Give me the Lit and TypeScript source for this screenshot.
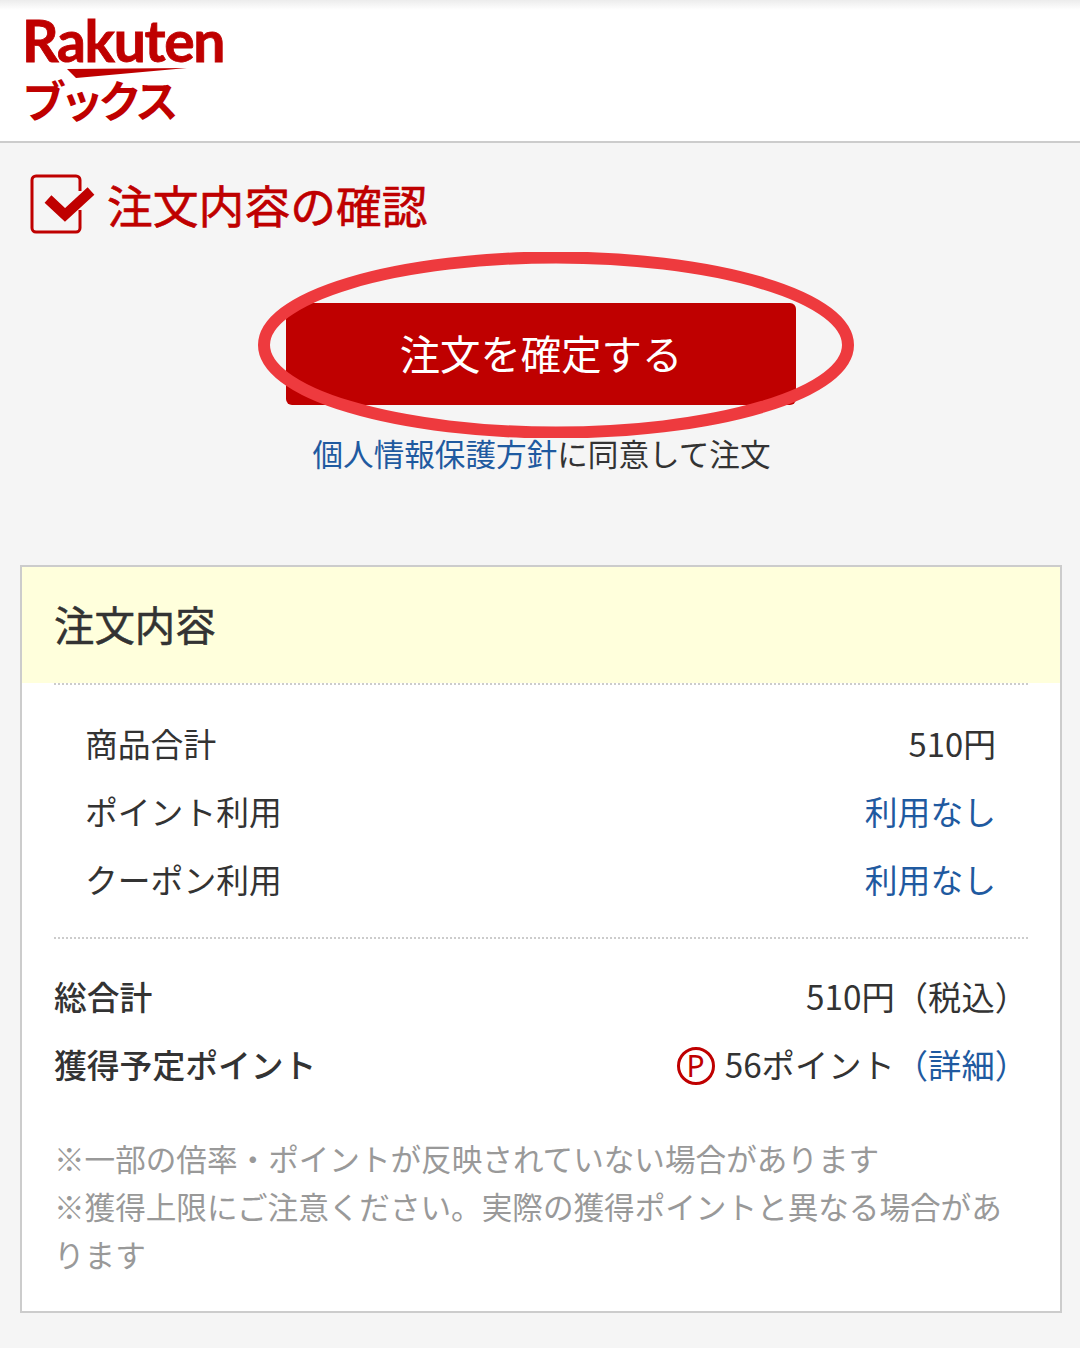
import { LitElement, html, css } from "lit";
import { customElement } from "lit/decorators.js";

@customElement("app-root")
export class AppRoot extends LitElement {
  render() {
    return html`
      <header class="header">
        <div class="logo">
          <div class="logo-word">Rakuten</div>
          <svg class="swoosh" width="130" height="14" viewBox="0 0 130 14">
            <polygon points="2,1 122,0 11,10" fill="#bf0000"></polygon>
          </svg>
          <div class="logo-books">ブックス</div>
        </div>
      </header>

      <main class="main">
        <h1 class="title">
          <svg class="check" width="66" height="60" viewBox="0 0 66 60">
            <path
              d="M50 17V6a4 4 0 0 0-4-4H6a4 4 0 0 0-4 4v48a4 4 0 0 0 4 4h40a4 4 0 0 0 4-4V36"
              fill="none"
              stroke="#bf0000"
              stroke-width="3"
            ></path>
            <path d="M18 25L35 41L61 17" fill="none" stroke="#bf0000" stroke-width="10"></path>
          </svg>
          注文内容の確認
        </h1>

        <div class="confirm">
          <button class="order-btn">注文を確定する</button>
          <svg class="circle" width="596" height="186" viewBox="0 0 596 186">
            <ellipse cx="298" cy="93" rx="292" ry="87.5" fill="none" stroke="#ee3a3e" stroke-width="12"></ellipse>
          </svg>
          <p class="agree"><a>個人情報保護方針</a>に同意して注文</p>
        </div>

        <section class="card">
          <h2 class="card-title">注文内容</h2>
          <div class="rows">
            <div class="row"><span>商品合計</span><span>510円</span></div>
            <div class="row"><span>ポイント利用</span><a>利用なし</a></div>
            <div class="row"><span>クーポン利用</span><a>利用なし</a></div>
          </div>
          <div class="totals">
            <div class="row"><span>総合計</span><span>510円（税込）</span></div>
            <div class="row">
              <span>獲得予定ポイント</span>
              <span class="points"><i class="p-mark">P</i>56ポイント<a>（詳細）</a></span>
            </div>
          </div>
          <p class="note">
            ※一部の倍率・ポイントが反映されていない場合があります<br />
            ※獲得上限にご注意ください。実際の獲得ポイントと異なる場合があります
          </p>
        </section>
      </main>
    `;
  }

  static styles = css`
    :host {
      display: block;
      height: 1348px;
      overflow: hidden;
      background: #f5f5f5;
      color: #333;
      font-family: "Noto Sans CJK JP", "Noto Sans", sans-serif;
    }
    a {
      color: #1f5aa0;
    }
    .header {
      height: 143px;
      box-sizing: border-box;
      padding: 15px 0 0 25px;
      background: linear-gradient(#ececec, #fff 10px);
      border-bottom: 2px solid #ccc;
    }
    .logo {
      position: relative;
      width: 220px;
      color: #bf0000;
    }
    .logo-word {
      font-family: Lato, "Liberation Sans", sans-serif;
      font-weight: 700;
      font-size: 57px;
      line-height: 50px;
      letter-spacing: -1.3px;
      margin-left: -3px;
      -webkit-text-stroke: 0.8px #bf0000;
    }
    .swoosh {
      position: absolute;
      left: 40px;
      top: 53px;
    }
    .logo-books {
      margin: 12px 0 0 -3px;
      font-weight: 700;
      font-size: 44px;
      line-height: 44px;
      letter-spacing: -6px;
    }
    .main {
      padding: 0 18px 0 20px;
    }
    .title {
      display: flex;
      align-items: center;
      gap: 11px;
      height: 60px;
      margin: 31px 0 0 10px;
      font-size: 45.8px;
      font-weight: 400;
      color: #bf0000;
      -webkit-text-stroke: 0.6px #bf0000;
    }
    .check {
      flex: none;
    }
    .confirm {
      position: relative;
      display: flex;
      flex-direction: column;
      align-items: center;
      padding-top: 69px;
    }
    .order-btn {
      width: 510px;
      height: 102px;
      padding: 0 0 3px;
      border: 0;
      border-radius: 6px;
      background: #bf0000;
      color: #fff;
      font-family: inherit;
      font-size: 40.4px;
    }
    .circle {
      position: absolute;
      left: 238px;
      top: 18px;
    }
    .agree {
      margin: 24px 0 0 1px;
      font-size: 30.6px;
      line-height: 48px;
    }
    .card {
      margin-top: 88px;
      height: 748px;
      box-sizing: border-box;
      border: 2px solid #ccc;
      background: #fff;
    }
    .card-title {
      height: 116px;
      margin: 0;
      padding-left: 32px;
      font-size: 40.4px;
      font-weight: 400;
      line-height: 114px;
      background: #ffffdc;
      -webkit-text-stroke: 0.5px #333;
    }
    .rows,
    .totals {
      margin: 0 32px;
    }
    .rows {
      padding: 23px 32px 25px 31px;
      border-top: 2px dotted #ccc;
      border-bottom: 2px dotted #ccc;
    }
    .totals {
      padding-top: 22px;
    }
    .row {
      display: flex;
      justify-content: space-between;
      align-items: center;
      height: 68px;
      font-size: 32.8px;
    }
    .totals .row {
      font-size: 33.3px;
    }
    .totals .row span:first-child {
      font-size: 32.8px;
      font-weight: 500;
    }
    .points {
      display: flex;
      align-items: center;
    }
    .p-mark {
      display: flex;
      align-items: center;
      justify-content: center;
      width: 38px;
      height: 38px;
      box-sizing: border-box;
      margin: 5px 10px 0 0;
      border: 3px solid #bf0000;
      border-radius: 50%;
      color: #bf0000;
      font-family: "Noto Sans", sans-serif;
      font-style: normal;
      font-size: 30px;
      line-height: 1;
    }
    .note {
      margin: 37px 32px 0;
      font-size: 30.6px;
      line-height: 48px;
      color: #999;
    }
  `;
}
